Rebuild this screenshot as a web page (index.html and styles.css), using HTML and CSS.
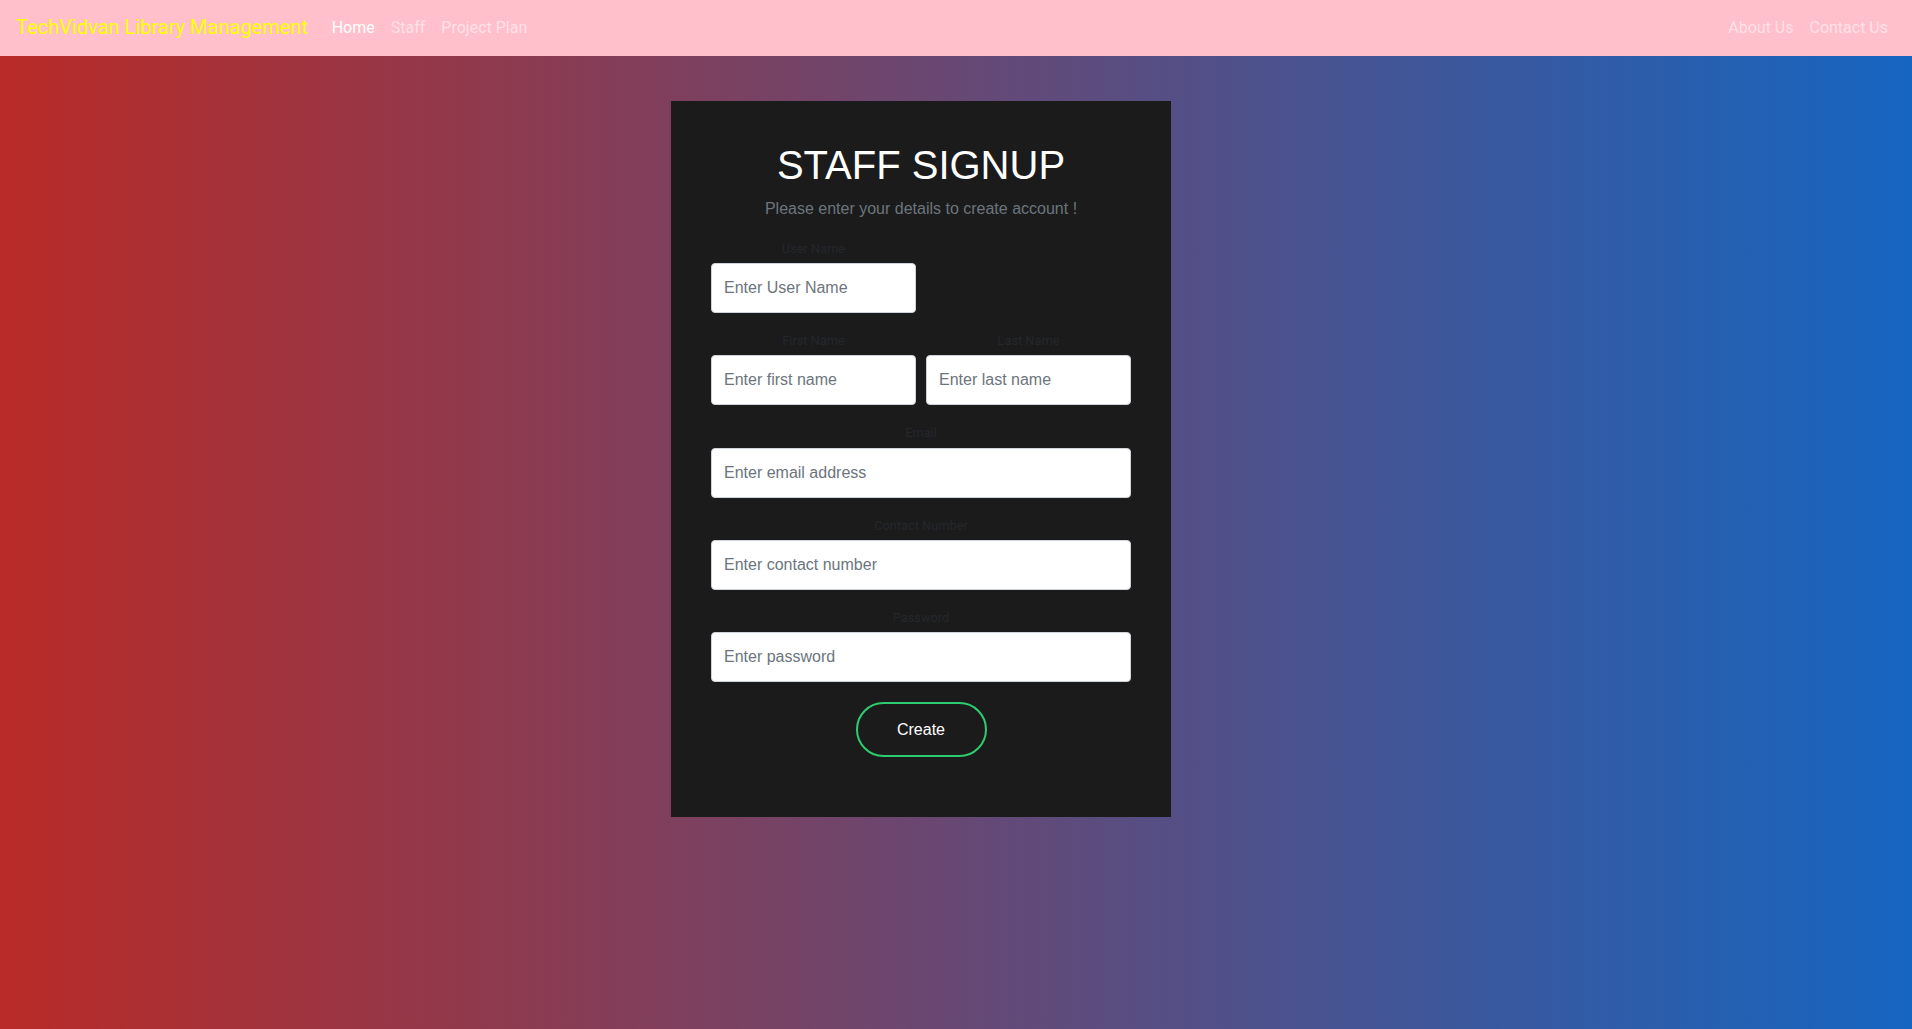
FILE: index.html
```html
<!DOCTYPE html>
<html lang="en">
<head>
<meta charset="utf-8">
<title>Staff Signup</title>
<link rel="stylesheet" href="styles.css">
</head>
<body>
<nav class="navbar">
  <a class="brand" href="#">TechVidvan Library Management</a>
  <ul class="nav-links">
    <li><a class="nav-link active" href="#">Home</a></li>
    <li><a class="nav-link" href="#">Staff</a></li>
    <li><a class="nav-link" href="#">Project Plan</a></li>
  </ul>
  <ul class="nav-links nav-right">
    <li><a class="nav-link" href="#">About Us</a></li>
    <li><a class="nav-link" href="#">Contact Us</a></li>
  </ul>
</nav>
<main class="page">
  <form class="card">
    <h1 class="title">STAFF SIGNUP</h1>
    <p class="subtitle">Please enter your details to create account !</p>
    <div class="row">
      <div class="group">
        <label class="label">User Name</label>
        <input class="input" type="text" placeholder="Enter User Name">
      </div>
      <div class="group"></div>
    </div>
    <div class="row">
      <div class="group">
        <label class="label">First Name</label>
        <input class="input" type="text" placeholder="Enter first name">
      </div>
      <div class="group">
        <label class="label">Last Name</label>
        <input class="input" type="text" placeholder="Enter last name">
      </div>
    </div>
    <div class="group">
      <label class="label">Email</label>
      <input class="input" type="email" placeholder="Enter email address">
    </div>
    <div class="group">
      <label class="label">Contact Number</label>
      <input class="input" type="text" placeholder="Enter contact number">
    </div>
    <div class="group last">
      <label class="label">Password</label>
      <input class="input" type="password" placeholder="Enter password">
    </div>
    <div class="actions">
      <button class="btn" type="button">Create</button>
    </div>
  </form>
</main>
</body>
</html>
```
FILE: styles.css
```css
* { box-sizing: border-box; }
html, body { margin: 0; padding: 0; }
body {
  min-height: 100vh;
  background: linear-gradient(to right, #b92b27, #1565c0);
  font-family: Roboto, "Liberation Sans", Arial, sans-serif;
}
.navbar {
  height: 56px;
  background: #ffc0cb;
  display: flex;
  align-items: center;
  padding: 0 16px 2px 12px;
}
.brand {
  color: #ffff00;
  font-size: 20px;
  text-decoration: none;
  margin-right: 16px;
  padding-left: 4px;
}
.nav-links {
  list-style: none;
  margin: 0;
  padding: 0;
  display: flex;
}
.nav-right { margin-left: auto; }
.nav-link {
  display: block;
  padding: 8px;
  font-size: 16px;
  text-decoration: none;
  color: rgba(255, 255, 255, 0.55);
}
.nav-link.active { color: #ffffff; }
.page {
  display: flex;
  justify-content: center;
  padding-top: 45px;
}
.card {
  width: 500px;
  margin-right: 70px;
  background: #1b1b1b;
  padding: 40px 40px 60px;
  font-family: "Liberation Sans", Arial, sans-serif;
}
.title {
  margin: 0;
  color: #ffffff;
  font-size: 40px;
  font-weight: 400;
  line-height: 48px;
  text-align: center;
}
.subtitle {
  margin: 8px 0 18px;
  color: #6c757d;
  font-size: 16px;
  line-height: 24px;
  text-align: center;
}
.row {
  display: flex;
  gap: 10px;
}
.row .group { flex: 1; min-width: 0; }
.group {
  display: flex;
  flex-direction: column;
  margin-bottom: 18px;
}
.group.last { margin-bottom: 20px; }
.label {
  font-family: Roboto, "Liberation Sans", Arial, sans-serif;
  font-size: 12.8px;
  line-height: 19.2px;
  color: #24272c;
  text-align: center;
  margin-bottom: 5px;
}
.input {
  height: 50px;
  width: 100%;
  border: 1px solid #ced4da;
  border-radius: 4px;
  background: #ffffff;
  padding: 12px 12px;
  font-family: "Liberation Sans", Arial, sans-serif;
  font-size: 16px;
  color: #212529;
  outline: none;
}
.input::placeholder { color: #6c757d; opacity: 1; }
.actions {
  display: flex;
  justify-content: center;
}
.btn {
  width: 131px;
  height: 55px;
  border: 2px solid #2ecc71;
  border-radius: 28px;
  background: transparent;
  color: #ffffff;
  font-family: "Liberation Sans", Arial, sans-serif;
  font-size: 16px;
  cursor: pointer;
}
```
